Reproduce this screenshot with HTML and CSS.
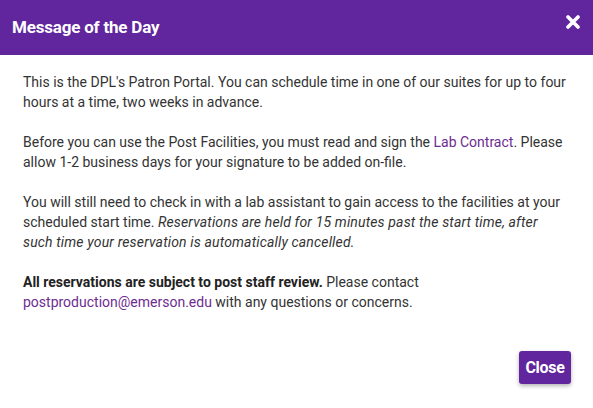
FILE: index.html
```html
<!DOCTYPE html>
<html>
<head>
<meta charset="utf-8">
<link rel="stylesheet" href="styles.css">
</head>
<body>
<div class="modal">
  <div class="header">
    <h1 class="title">Message of the Day</h1>
    <span class="close-x"><svg width="14" height="14" viewBox="0 0 14 14"><path d="M2 2 L12 12 M12 2 L2 12" stroke="#fff" stroke-width="3.6" stroke-linecap="round"/></svg></span>
  </div>
  <div class="body">
    <p>This is the DPL's Patron Portal. You can schedule time in one of our suites for up to four hours at a time, two weeks in advance.</p>
    <p>Before you can use the Post Facilities, you must read and sign the <a class="link">Lab Contract</a>. Please allow 1-2 business days for your signature to be added on-file.</p>
    <p>You will still need to check in with a lab assistant to gain access to the facilities at your scheduled start time. <em>Reservations are held for 15 minutes past the start time, after such time your reservation is automatically cancelled.</em></p>
    <p><strong>All reservations are subject to post staff review.</strong> Please contact <a class="link">postproduction@emerson.edu</a> with any questions or concerns.</p>
  </div>
  <div class="footer">
    <button class="btn">Close</button>
  </div>
</div>
</body>
</html>
```
FILE: styles.css
```css
html, body {
  margin: 0;
  padding: 0;
  background: #fff;
}
body {
  font-family: Roboto, "Liberation Sans", sans-serif;
  width: 593px;
  height: 408px;
  overflow: hidden;
}
.modal {
  display: flex;
  flex-direction: column;
  height: 408px;
}
.header {
  background: #61259e;
  height: 55px;
  display: flex;
  align-items: center;
  justify-content: space-between;
  padding: 0 13px 0 12px;
  box-sizing: border-box;
}
.title {
  margin: 0;
  font-size: 17px;
  font-weight: 700;
  color: #fff;
  letter-spacing: -0.2px;
  position: relative;
  top: -1px;
}
.close-x {
  display: flex;
  position: relative;
  top: -6px;
}
.body {
  padding: 17px 23px 0 23px;
  color: #333;
  font-size: 14px;
  line-height: 20px;
}
.body p {
  margin: 0 0 20px 0;
}
.body em {
  letter-spacing: 0.15px;
}
.link {
  color: #6d2c91;
  text-decoration: none;
}
.body strong {
  font-weight: 700;
  color: #222;
}
.footer {
  margin-top: auto;
  display: flex;
  justify-content: flex-end;
  padding: 0 22px 24px 0;
}
.btn {
  background: #61259e;
  color: #fff;
  border: none;
  border-radius: 3px;
  font-family: Roboto, "Liberation Sans", sans-serif;
  font-weight: 700;
  font-size: 16px;
  width: 52px;
  height: 33px;
  padding: 0;
  letter-spacing: -0.3px;
  box-shadow: 0 2px 4px rgba(0,0,0,0.3);
}
```
